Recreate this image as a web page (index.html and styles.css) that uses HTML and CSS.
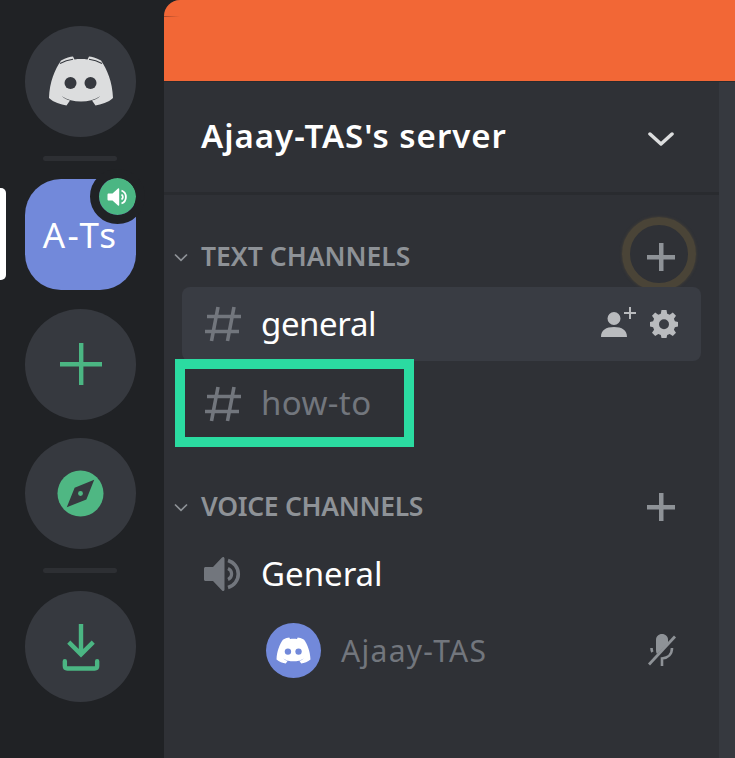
FILE: index.html
```html
<!DOCTYPE html>
<html lang="en">
<head>
<meta charset="utf-8">
<title>Ajaay-TAS's server</title>
<link rel="stylesheet" href="styles.css">
</head>
<body>
<div class="app">
  <nav class="rail">
    <div class="circle">
      <svg class="logo" viewBox="0 0 66 50"><path fill="#dcddde" d="M13 4.500C18 1.800 22.500 .8 25 .5L26.500 3.500C30.500 2.900 35.500 2.900 39.500 3.500L41 .5C43.500 .8 48 1.800 53 4.500C59 13 64.500 26 65 42C60.500 46.500 53 48.500 47.500 49.500L44 44.500C47.500 43.500 50 42 52.500 40C47 43.700 40 45.500 33 45.500C26 45.500 19 43.700 13.500 40C16 42 18.500 43.500 22 44.500L18.500 49.500C13 48.500 5.500 46.500 1 42C1.500 26 7 13 13 4.500Z"/><path fill="none" stroke="#36393f" stroke-width="1.100" d="M12 7.500Q18 4.300 25 3.300M41 3.300Q48 4.300 54 7.500"/><circle cx="22.500" cy="27" r="6" fill="#36393f"/><circle cx="42.500" cy="27" r="6" fill="#36393f"/></svg>
    </div>
    <div class="sep"></div>
    <div class="server">
      <span class="server-label">A-Ts</span>
      <span class="badge">
        <svg viewBox="0 0 24 24"><path fill="#fff" d="M2.500 8.500H6.500L12 3.500C12.700 3 13.200 3.400 13.200 4V20C13.200 20.600 12.700 21 12 20.500L6.500 15.500H2.500C2 15.500 1.500 15 1.500 14.500V9.500C1.500 9 2 8.500 2.500 8.500Z"/><path fill="none" stroke="#fff" stroke-width="1.800" d="M15.500 9.500A3 3 0 0 1 15.500 14.500M15.500 5.500A7 7 0 0 1 15.500 18.500"/></svg>
      </span>
    </div>
    <div class="circle plus-circle">
      <svg class="icon-plus" viewBox="0 0 42 42"><path fill="#4bb683" d="M19 0h4.400v19H42v4.400H23.400V42H19V23.400H0V19h19z"/></svg>
    </div>
    <div class="circle explore">
      <svg class="icon-compass" viewBox="0 0 48 48"><circle cx="24" cy="24" r="23.500" fill="#4fb783"/><path fill="#36393f" fill-rule="evenodd" d="M38 10L30 30L10 38L18 18ZM24 21.500A2.500 2.500 0 1 0 24 26.500A2.500 2.500 0 1 0 24 21.500Z"/></svg>
    </div>
    <div class="sep sep-low"></div>
    <div class="circle">
      <svg class="icon-download" viewBox="0 0 38 48"><path fill="none" stroke="#4bb683" stroke-width="4.500" d="M19 0V30M6.500 18.500L19 31L31.500 18.500"/><path fill="none" stroke="#4bb683" stroke-width="4.500" stroke-linecap="round" stroke-linejoin="round" d="M2.500 38V43C2.500 44.500 3 45.500 5 45.500H33C35 45.500 35.500 44.500 35.500 43V38"/></svg>
    </div>
    <div class="pill"></div>
  </nav>

  <main class="panel">
    <div class="banner"></div>
    <div class="sidebar">
      <section class="channels">
        <header class="server-head">
          <h1>Ajaay-TAS's server</h1>
          <svg class="head-chevron" viewBox="0 0 26 16"><path fill="none" stroke="#dcddde" stroke-width="3.500" stroke-linecap="round" stroke-linejoin="round" d="M2 3L13 13L24 3"/></svg>
        </header>

        <div class="category cat-text">
          <svg class="cat-chevron" viewBox="0 0 14 9"><path fill="none" stroke="#8e9297" stroke-width="1.700" d="M1 1.500L7 7.300L13 1.500"/></svg>
          <span class="cat-label">TEXT CHANNELS</span>
          <span class="cat-plus">
            <svg viewBox="0 0 28 28"><path fill="#8e9297" d="M12 0h4.500v12H28v4.500H16.500V28H12V16.500H0V12h12z"/></svg>
            <span class="ring"></span>
          </span>
        </div>

        <div class="channel active">
          <svg class="hash" viewBox="0 0 38 36"><path fill="none" stroke="#72767d" stroke-width="3.600" d="M14 1L7.500 35M30 1L23.500 35M3 10.500H37M1 25.500H35"/></svg>
          <span class="channel-name tight">general</span>
          <span class="channel-tools">
            <svg class="icon-invite" viewBox="0 0 36 30"><path fill="#b9bbbe" d="M13 5A6.500 6.500 0 1 1 13 18A6.500 6.500 0 1 1 13 5ZM0 30C0 23 5 20 13 20C21 20 26 23 26 30Z"/><path fill="#b9bbbe" d="M28 0h2v5h5v2h-5v5h-2V7h-5V5h5z"/></svg>
            <svg class="icon-gear" viewBox="0 0 28 28"><path fill="#b9bbbe" fill-rule="evenodd" d="M11.500 0H16.500L17.200 3.700L19.700 4.700L22.800 2.600L26 5.700L23.900 8.800L24.900 11.300L28 12V16.500L24.900 17.200L23.900 19.700L26 22.800L22.800 26L19.700 23.900L17.200 24.900L16.500 28H11.500L10.800 24.900L8.300 23.900L5.200 26L2 22.800L4.100 19.700L3.100 17.200L0 16.500V12L3.100 11.300L4.100 8.800L2 5.700L5.200 2.600L8.300 4.700L10.800 3.700ZM14 9.200A5 5 0 1 0 14 19.200A5 5 0 1 0 14 9.200Z"/></svg>
          </span>
        </div>

        <div class="channel howto">
          <svg class="hash" viewBox="0 0 38 36"><path fill="none" stroke="#72767d" stroke-width="3.600" d="M14 1L7.500 35M30 1L23.500 35M3 10.500H37M1 25.500H35"/></svg>
          <span class="channel-name muted">how-to</span>
          <span class="highlight"></span>
        </div>

        <div class="category cat-voice">
          <svg class="cat-chevron" viewBox="0 0 14 9"><path fill="none" stroke="#8e9297" stroke-width="1.700" d="M1 1.500L7 7.300L13 1.500"/></svg>
          <span class="cat-label">VOICE CHANNELS</span>
          <span class="cat-plus">
            <svg viewBox="0 0 28 28"><path fill="#8e9297" d="M12 0h4.500v12H28v4.500H16.500V28H12V16.500H0V12h12z"/></svg>
          </span>
        </div>

        <div class="channel voice">
          <svg class="speaker" viewBox="0 0 38 36"><path fill="#72767d" d="M1.500 11H9L18 1.500C19 .5 20.500 1 20.500 2.500V33.500C20.500 35 19 35.500 18 34.500L9 25H1.500C.7 25 0 24.300 0 23.500V12.500C0 11.700 .7 11 1.500 11Z"/><path fill="none" stroke="#72767d" stroke-width="3.200" d="M24 12.500A6 6 0 0 1 24 23.500"/><path fill="none" stroke="#72767d" stroke-width="3.600" d="M24 4.500A14 14 0 0 1 24 31.500"/></svg>
          <span class="channel-name">General</span>
        </div>

        <div class="member">
          <span class="avatar">
            <svg viewBox="0 0 66 50"><path fill="#fff" d="M13 4.500C18 1.800 22.500 .8 25 .5L26.500 3.500C30.500 2.900 35.500 2.900 39.500 3.500L41 .5C43.500 .8 48 1.800 53 4.500C59 13 64.500 26 65 42C60.500 46.500 53 48.500 47.500 49.500L44 44.500C47.500 43.500 50 42 52.500 40C47 43.700 40 45.500 33 45.500C26 45.500 19 43.700 13.500 40C16 42 18.500 43.500 22 44.500L18.500 49.500C13 48.500 5.500 46.500 1 42C1.500 26 7 13 13 4.500Z"/><circle cx="22.500" cy="27" r="6" fill="#7289da"/><circle cx="42.500" cy="27" r="6" fill="#7289da"/></svg>
          </span>
          <span class="member-name">Ajaay-TAS</span>
          <svg class="icon-mute" viewBox="0 0 28 32"><path fill="#8e9297" d="M14 0C17.500 0 20 2.500 20 5.500V9L9 20C8.300 19 8 17.500 8 16V5.500C8 2.500 10.500 0 14 0Z"/><path fill="none" stroke="#8e9297" stroke-width="2.600" d="M3.500 14C3.500 15.500 3.800 17 4.500 18M24 14C24 20 20 24 14 24.500V32"/><path fill="none" stroke="#8e9297" stroke-width="2.800" d="M1 30.500L27 2.500"/></svg>
        </div>
      </section>
      <aside class="strip"></aside>
    </div>
  </main>
</div>
</body>
</html>
```

FILE: styles.css
```css
* { box-sizing: border-box; }

html, body {
  margin: 0;
  height: 100%;
  background: #202225;
  overflow: hidden;
}

body {
  font-family: "Noto Sans", "Open Sans", sans-serif;
}

.app {
  display: flex;
  width: 735px;
  height: 758px;
}

/* left rail */
.rail {
  position: relative;
  flex: 0 0 164px;
  display: flex;
  flex-direction: column;
  align-items: flex-start;
  padding: 26px 0 0 25px;
  background: #202225;
  gap: 18.500px;
}

.circle {
  flex: 0 0 111px;
  width: 111px;
  height: 111px;
  border-radius: 50%;
  background: #36393f;
  display: flex;
  align-items: center;
  justify-content: center;
}

.logo { width: 66px; height: 50px; margin-top: -1px; }

.sep {
  width: 74px;
  height: 5px;
  margin-left: 18px;
  border-radius: 3px;
  background: #2d2f33;
}

.server {
  position: relative;
  flex: 0 0 111px;
  width: 111px;
  height: 111px;
  border-radius: 36px;
  background: #7289da;
  color: #fff;
  display: flex;
  align-items: center;
  justify-content: center;
}

.server-label {
  font-size: 35px;
  letter-spacing: 2.300px;
  line-height: 1;
  margin-top: -1px;
}

.badge {
  position: absolute;
  top: -10px;
  right: -9px;
  width: 55px;
  height: 55px;
  border-radius: 50%;
  border: 9px solid #202225;
  background: #4bb683;
  background-clip: padding-box;
  display: flex;
  align-items: center;
  justify-content: center;
}

.badge svg { width: 24px; height: 24px; }

.icon-plus { width: 42px; height: 42px; }
.icon-compass { width: 47px; height: 47px; }
.icon-download { width: 38px; height: 47px; margin-top: 1px; }

.pill {
  position: absolute;
  left: 0;
  top: 188px;
  width: 6px;
  height: 92px;
  background: #fff;
  border-radius: 0 5px 5px 0;
}

/* main panel */
.panel {
  flex: 1;
  min-width: 0;
  display: flex;
  flex-direction: column;
  background: #2f3136;
  border-radius: 16px 0 0 0;
  overflow: hidden;
}

.banner {
  position: relative;
  flex: 0 0 82px;
  background: #f26736;
  border-bottom: 1px solid #2a2b2e;
}

.banner::before {
  content: "";
  position: absolute;
  left: 0;
  top: 16px;
  width: 16px;
  height: 1px;
  background: linear-gradient(to right, #a8482a, #f26736);
}

.sidebar {
  flex: 1;
  display: flex;
  min-height: 0;
}

.channels {
  flex: 0 0 555px;
  display: flex;
  flex-direction: column;
  padding: 0 18px;
}

.strip {
  flex: 1;
  background: #36393f;
}

.server-head {
  flex: 0 0 113px;
  margin: 0 -18px;
  padding: 0 45px 3px 37px;
  display: flex;
  align-items: center;
  justify-content: space-between;
  border-bottom: 3px solid #292b2f;
}

.server-head h1 {
  margin: 0;
  color: #fff;
  font-size: 33px;
  font-weight: 600;
  letter-spacing: 1px;
}

.head-chevron { width: 26px; height: 16px; margin-top: 6px; }

.category {
  display: flex;
  align-items: center;
  height: 40px;
  margin-left: -8px;
  color: #8e9297;
}

.cat-text { margin-top: 42px; }
.cat-voice { margin-top: 46px; }

.cat-chevron { width: 14px; height: 9px; margin-right: 13px; }

.cat-label {
  font-size: 26.500px;
  font-weight: 600;
  letter-spacing: -.15px;
  position: relative;
  top: -1px;
}

.cat-text .cat-label { letter-spacing: 0; }
.cat-voice .cat-label { letter-spacing: -.3px; }

.cat-plus {
  position: relative;
  margin-left: auto;
  margin-right: 26px;
  width: 28px;
  height: 28px;
  display: flex;
}

.cat-plus svg { width: 28px; height: 28px; }

.ring {
  position: absolute;
  left: -25px;
  top: -26px;
  width: 74px;
  height: 74px;
  border-radius: 50%;
  border: 8px solid #4a4437;
  box-shadow: 0 0 3px #4a4437;
}

.channel {
  position: relative;
  display: flex;
  align-items: center;
  height: 74px;
  padding-left: 22px;
  border-radius: 8px;
}

.cat-text + .channel { margin-top: 10px; }

.channel.active { background: #393c43; }

.hash { width: 38px; height: 36px; flex: none; }
.speaker { width: 38px; height: 36px; flex: none; }

.channel-name {
  margin-left: 19px;
  font-size: 33px;
  color: #fff;
  line-height: 1;
  padding-bottom: 2px;
}

.channel-name.tight { letter-spacing: -.4px; }

.channel-name.muted {
  color: #72767d;
  letter-spacing: .4px;
  padding-bottom: 4px;
}

.voice { margin-top: 10px; }

.channel-tools {
  margin-left: auto;
  margin-right: 23px;
  display: flex;
  align-items: center;
  gap: 13px;
}

.icon-invite { width: 36px; height: 30px; margin-top: -4px; }
.icon-gear { width: 28px; height: 28px; }

.howto { margin-top: 6px; }

.highlight {
  position: absolute;
  left: -7px;
  top: -8px;
  width: 239px;
  height: 88px;
  border: 10px solid #2bdba1;
}

.member {
  display: flex;
  align-items: center;
  height: 56px;
  margin-top: 11px;
  padding-left: 84px;
}

.avatar {
  width: 55px;
  height: 55px;
  flex: none;
  border-radius: 50%;
  background: #7289da;
  display: flex;
  align-items: center;
  justify-content: center;
}

.avatar svg { width: 35px; height: 27px; }

.member-name {
  margin-left: 20px;
  font-size: 30px;
  letter-spacing: 1.300px;
  color: #72767d;
}

.icon-mute {
  margin-left: auto;
  margin-right: 25px;
  width: 28px;
  height: 32px;
}
```
